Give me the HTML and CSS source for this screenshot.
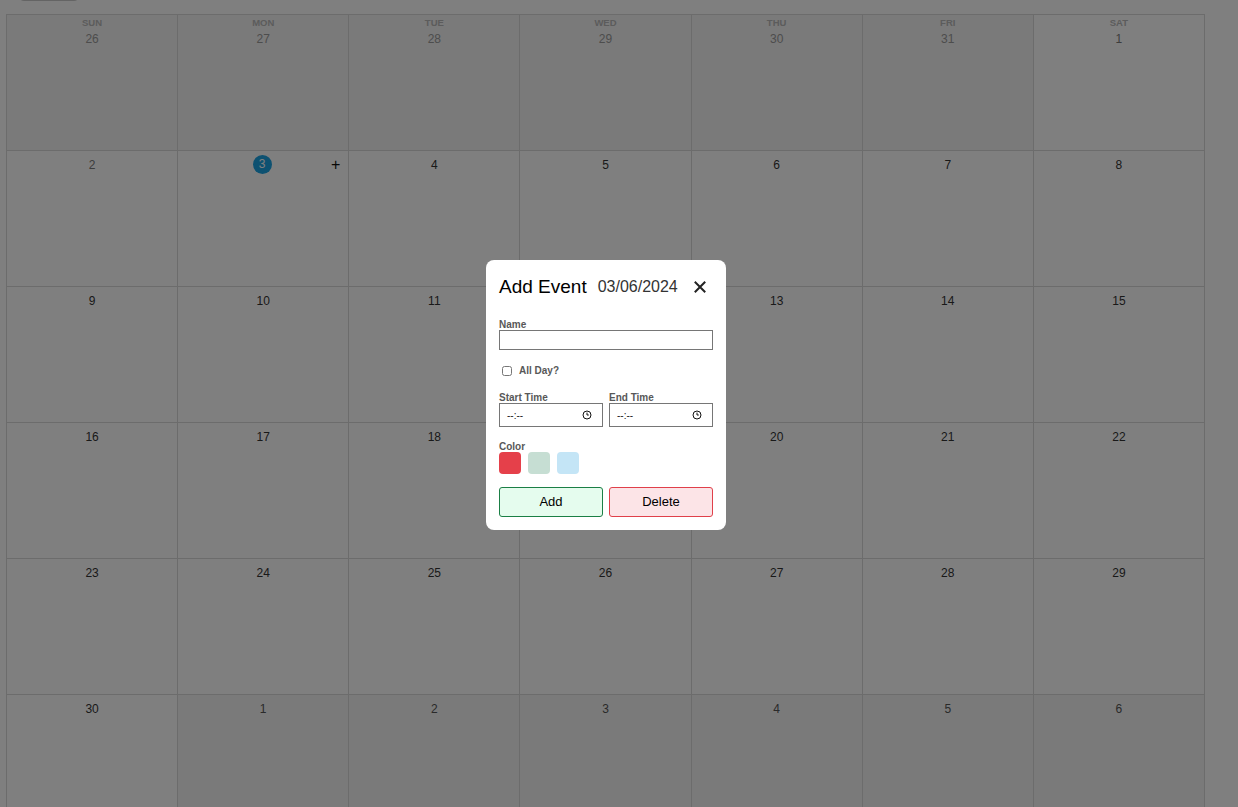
FILE: index.html
```html
<!DOCTYPE html>
<html lang="en">
<head>
<meta charset="utf-8">
<title>Calendar</title>
<link rel="stylesheet" href="styles.css">
</head>
<body>
<div class="page">
  <div class="toolbar"><button class="tb-btn" type="button" aria-label="Today"></button></div>
  <div class="calendar">
    <div class="cell other prev"><span class="dow">SUN</span><span class="num">26</span></div>
    <div class="cell other prev"><span class="dow">MON</span><span class="num">27</span></div>
    <div class="cell other prev"><span class="dow">TUE</span><span class="num">28</span></div>
    <div class="cell other prev"><span class="dow">WED</span><span class="num">29</span></div>
    <div class="cell other prev"><span class="dow">THU</span><span class="num">30</span></div>
    <div class="cell other prev"><span class="dow">FRI</span><span class="num">31</span></div>
    <div class="cell past"><span class="dow">SAT</span><span class="num">1</span></div>

    <div class="cell past"><span class="num">2</span></div>
    <div class="cell"><span class="num today">3</span><span class="plus">+</span></div>
    <div class="cell"><span class="num">4</span></div>
    <div class="cell"><span class="num">5</span></div>
    <div class="cell"><span class="num">6</span></div>
    <div class="cell"><span class="num">7</span></div>
    <div class="cell"><span class="num">8</span></div>

    <div class="cell"><span class="num">9</span></div>
    <div class="cell"><span class="num">10</span></div>
    <div class="cell"><span class="num">11</span></div>
    <div class="cell"><span class="num">12</span></div>
    <div class="cell"><span class="num">13</span></div>
    <div class="cell"><span class="num">14</span></div>
    <div class="cell"><span class="num">15</span></div>

    <div class="cell"><span class="num">16</span></div>
    <div class="cell"><span class="num">17</span></div>
    <div class="cell"><span class="num">18</span></div>
    <div class="cell"><span class="num">19</span></div>
    <div class="cell"><span class="num">20</span></div>
    <div class="cell"><span class="num">21</span></div>
    <div class="cell"><span class="num">22</span></div>

    <div class="cell"><span class="num">23</span></div>
    <div class="cell"><span class="num">24</span></div>
    <div class="cell"><span class="num">25</span></div>
    <div class="cell"><span class="num">26</span></div>
    <div class="cell"><span class="num">27</span></div>
    <div class="cell"><span class="num">28</span></div>
    <div class="cell"><span class="num">29</span></div>

    <div class="cell"><span class="num">30</span></div>
    <div class="cell other next"><span class="num">1</span></div>
    <div class="cell other next"><span class="num">2</span></div>
    <div class="cell other next"><span class="num">3</span></div>
    <div class="cell other next"><span class="num">4</span></div>
    <div class="cell other next"><span class="num">5</span></div>
    <div class="cell other next"><span class="num">6</span></div>
  </div>
</div>

<div class="backdrop">
  <div class="modal">
    <div class="modal-head">
      <span class="modal-title">Add Event</span>
      <span class="modal-date">03/06/2024</span>
      <span class="modal-close">
        <svg width="12" height="12" viewBox="0 0 12 12"><path d="M1.5 1.5 L10.5 10.5 M10.5 1.5 L1.5 10.5" stroke="#222" stroke-width="2" stroke-linecap="square"/></svg>
      </span>
    </div>

    <div class="field field-name">
      <div class="label">Name</div>
      <input class="text-input" type="text">
    </div>

    <div class="check-row">
      <input class="check" type="checkbox">
      <span class="label">All Day?</span>
    </div>

    <div class="time-row">
      <div class="field">
        <div class="label">Start Time</div>
        <div class="time-input"><span>--:--</span>
          <svg width="10" height="10" viewBox="0 0 10 10"><circle cx="5" cy="5" r="4" fill="none" stroke="#111" stroke-width="1"/><path d="M5 2.6 V5 H6.8" fill="none" stroke="#111" stroke-width="1"/></svg>
        </div>
      </div>
      <div class="field">
        <div class="label">End Time</div>
        <div class="time-input"><span>--:--</span>
          <svg width="10" height="10" viewBox="0 0 10 10"><circle cx="5" cy="5" r="4" fill="none" stroke="#111" stroke-width="1"/><path d="M5 2.6 V5 H6.8" fill="none" stroke="#111" stroke-width="1"/></svg>
        </div>
      </div>
    </div>

    <div class="field field-color">
      <div class="label">Color</div>
      <div class="swatches">
        <span class="swatch red"></span>
        <span class="swatch green"></span>
        <span class="swatch blue"></span>
      </div>
    </div>

    <div class="actions">
      <button class="btn btn-add" type="button">Add</button>
      <button class="btn btn-delete" type="button">Delete</button>
    </div>
  </div>
</div>
</body>
</html>
```

FILE: styles.css
```css
html, body {
  margin: 0;
  height: 100%;
  overflow: hidden;
}

body {
  font-family: "Liberation Sans", Arial, sans-serif;
  background: #fff;
  color: #333;
}

.page {
  padding: 0 33px 0 6px;
}

.toolbar {
  height: 31px;
  margin-top: -30px;
  padding-left: 12px;
}

.tb-btn {
  width: 62px;
  height: 31px;
  border: 1px solid #c8c8c8;
  border-radius: 6px;
  background: #fff;
  font-family: inherit;
}

.calendar {
  margin-top: 13px;
  width: 1199px;
  box-sizing: border-box;
  display: grid;
  grid-template-columns: repeat(7, 1fr);
  grid-auto-rows: 136px;
  border-top: 1px solid #d9d9d9;
  border-left: 1px solid #d9d9d9;
}

.cell {
  position: relative;
  display: flex;
  flex-direction: column;
  align-items: center;
  padding-top: 5.5px;
  border-right: 1px solid #d9d9d9;
  border-bottom: 1px solid #d9d9d9;
  box-sizing: border-box;
}

.cell.other {
  background: #f4f4f4;
}

.dow {
  font-size: 9.5px;
  font-weight: bold;
  line-height: 12px;
  color: #b8b8b8;
  margin-top: -3.5px;
  margin-bottom: 2px;
}

.num {
  font-size: 12px;
  line-height: 16px;
  color: #333;
}

.cell.past .num {
  color: #7a7a7a;
}

.cell.prev .num {
  color: #9a9a9a;
}

.cell.next .num {
  color: #555;
}

.num.today {
  width: 19px;
  height: 19px;
  margin-top: -1.5px;
  margin-right: 2px;
  border-radius: 50%;
  background: #1aa2e2;
  color: #fff;
  line-height: 19px;
  text-align: center;
}

.plus {
  position: absolute;
  top: 5.5px;
  right: 8px;
  font-size: 16px;
  line-height: 16px;
  color: #111;
}

.backdrop {
  position: fixed;
  inset: 0;
  background: rgba(0, 0, 0, 0.5);
  display: flex;
  align-items: center;
  justify-content: center;
  padding: 0 26px 17px 0;
}

.modal {
  width: 240px;
  box-sizing: border-box;
  padding: 13px;
  background: #fff;
  border-radius: 8px;
}

.modal-head {
  display: flex;
  align-items: center;
  height: 26px;
  padding-top: 2px;
  box-sizing: border-box;
}

.modal-title {
  font-size: 19px;
  color: #000;
}

.modal-date {
  font-size: 16px;
  color: #333;
  margin-left: 11px;
}

.modal-close {
  margin-left: auto;
  margin-right: 7px;
  display: flex;
}

.label {
  font-size: 10px;
  font-weight: bold;
  line-height: 10px;
  padding-top: 2px;
  color: #585858;
}

.field-name {
  margin-top: 19px;
}

.text-input {
  display: block;
  width: 100%;
  height: 20px;
  box-sizing: border-box;
  margin: 0;
  padding: 0 4px;
  border: 1px solid #767676;
  border-radius: 0;
  outline: none;
}

.check-row {
  margin-top: 15px;
  display: flex;
  align-items: center;
  height: 12px;
}

.check-row .label {
  padding-top: 0;
  line-height: 12px;
}

.check {
  width: 10px;
  height: 10px;
  margin: 0 7px 0 3px;
}

.time-row {
  margin-top: 14px;
  display: grid;
  grid-template-columns: 1fr 1fr;
  gap: 6px;
}

.time-input {
  height: 24px;
  box-sizing: border-box;
  border: 1px solid #767676;
  display: flex;
  align-items: center;
  justify-content: space-between;
  padding: 0 10px 0 7px;
  font-size: 10px;
  color: #222;
}

.field-color {
  margin-top: 13px;
}

.swatches {
  display: flex;
  gap: 7px;
}

.swatch {
  width: 22px;
  height: 22px;
  border-radius: 4px;
}

.swatch.red { background: #e5404a; }
.swatch.green { background: #c6ded3; }
.swatch.blue { background: #c4e5f6; }

.actions {
  margin-top: 13px;
  display: grid;
  grid-template-columns: 1fr 1fr;
  gap: 6px;
}

.btn {
  height: 30px;
  border-radius: 3px;
  font-family: inherit;
  font-size: 13px;
  color: #000;
  padding: 0 0 2px;
}

.btn-add {
  background: #e5fcee;
  border: 1px solid #1b7f45;
}

.btn-delete {
  background: #fce4e7;
  border: 1px solid #e0404a;
}
```
